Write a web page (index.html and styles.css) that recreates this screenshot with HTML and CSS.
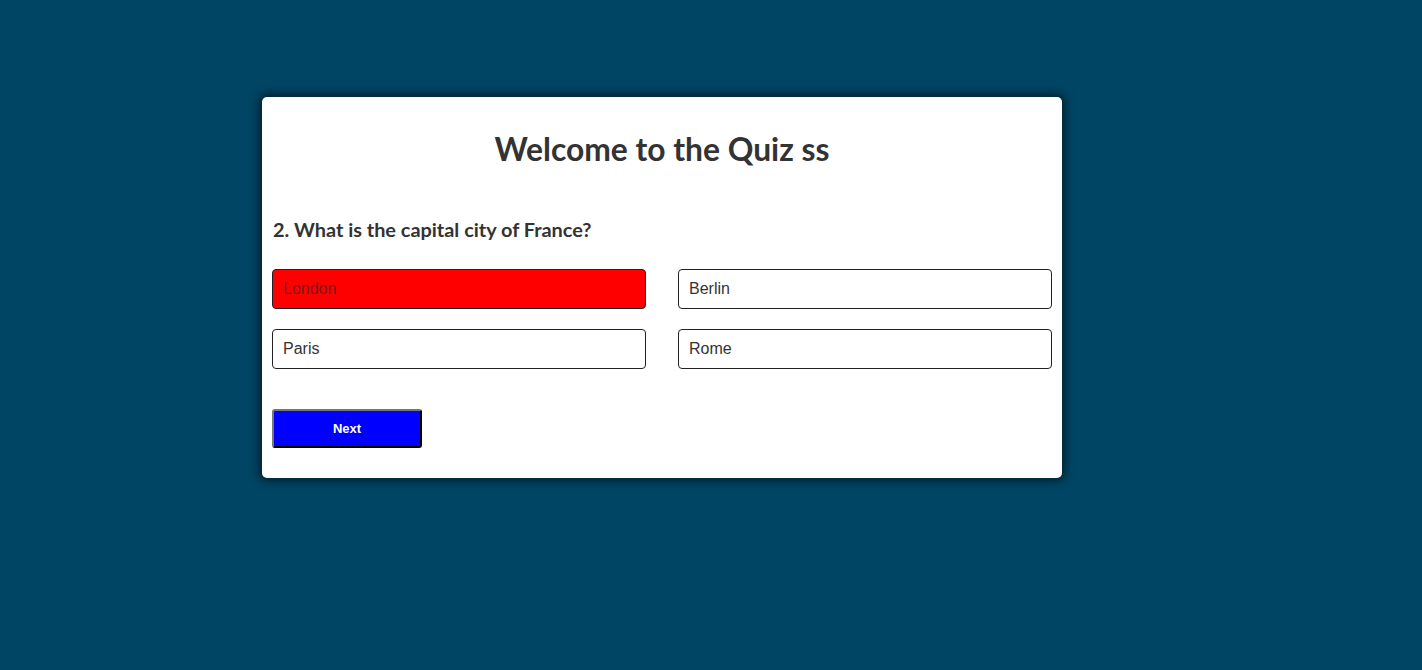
FILE: index.html
```html
<!DOCTYPE html>
<html>
<head>
<meta charset="utf-8">
<link rel="stylesheet" href="styles.css">
</head>
<body>
<div class="page">
  <div class="card">
    <h1 class="title">Welcome to the Quiz ss</h1>
    <div class="quiz">
      <h2 class="question">2. What is the capital city of France?</h2>
      <div class="answers">
        <button class="answer wrong">London</button>
        <button class="answer">Berlin</button>
        <button class="answer">Paris</button>
        <button class="answer">Rome</button>
      </div>
      <button class="next">Next</button>
    </div>
  </div>
</div>
</body>
</html>
```

FILE: styles.css
```css
* { box-sizing: border-box; }
html, body { margin: 0; padding: 0; }
body {
  background: #004564;
  font-family: "Lato", "Liberation Sans", sans-serif;
  color: #333;
  height: 670px;
  overflow: hidden;
}
.page {
  padding: 97px 0 0 262px;
}
.card {
  width: 800px;
  background: #fff;
  border-radius: 5px;
  box-shadow: 0 0 10px 3px rgba(0, 0, 0, 0.55);
  padding: 0 10px 30px;
}
.title {
  margin: 0;
  padding-top: 32px;
  font-size: 31.8px;
  font-weight: 700;
  text-align: center;
  line-height: 40px;
}
.question {
  margin: 48px 0 0 1px;
  font-size: 19.9px;
  font-weight: 700;
  line-height: 24px;
}
.answers {
  margin-top: 28px;
  display: grid;
  grid-template-columns: 374px 374px;
  column-gap: 32px;
  row-gap: 20px;
}
.answer {
  height: 40px;
  background: #fff;
  border: 1px solid #222;
  border-radius: 4px;
  text-align: left;
  padding: 0 10px;
  font-family: "Liberation Sans", Arial, sans-serif;
  font-size: 16px;
  color: #333;
}
.answer.wrong {
  background: #ff0000;
  color: #7a1a1a;
}
.next {
  display: block;
  margin-top: 40px;
  width: 150px;
  height: 39px;
  background: #0000ff;
  color: #fff;
  border: 2px outset #767676;
  border-color: #777 #222 #222 #777;
  border-radius: 3px;
  font-family: "Liberation Sans", Arial, sans-serif;
  font-weight: 700;
  font-size: 13px;
}
```
